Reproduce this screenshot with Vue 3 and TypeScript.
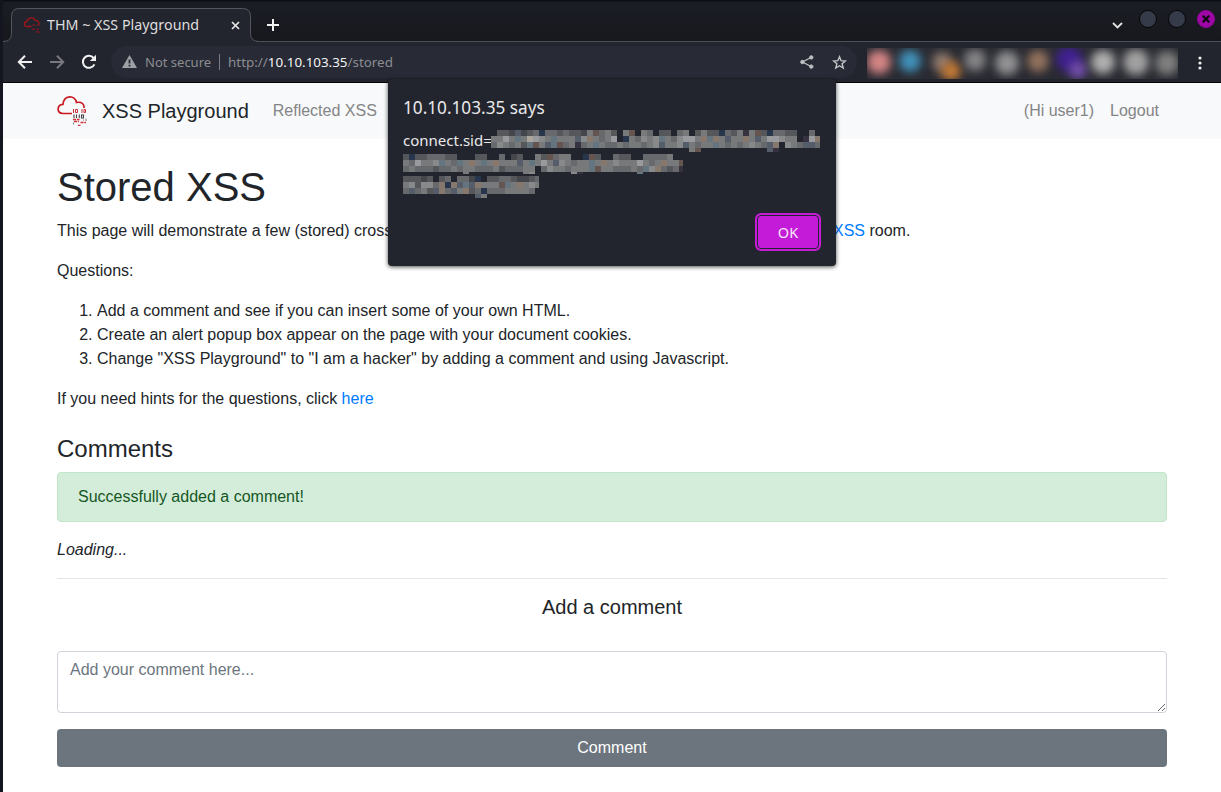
<script setup lang="ts">
interface Cell { x: number; y: number; w: number; h: number; fill: string }
interface Band { x: number; y: number; lastW: number; lastH: number; rows: string[] }

const palette: Record<string, string> = {
  a: '#44464b', b: '#56575b', c: '#67696c', d: '#78797b', e: '#87898b', f: '#989a9e',
  g: '#aaa49b', n: '#27354d', m: '#645550', p: '#86786c', s: '#657580', v: '#36323f', u: '#555d6b',
}

const bands: Band[] = [
  {
    x: 88, y: 0, lastW: 5, lastH: 4,
    rows: [
      '.bbauabcnccbcbbadmcdb.dm.dc.bb.cd.bdbbncbdvdmbnccbb..c.',
      'ddfdsdgfedsddduepdcdf.ndcedesdceffdpspduddpdudffedd.vfp',
      'cedcdbsmdusmcdvcdsdccdcddcdeuddeudcddsdcdcdedcup.edcuuc',
      '.................................dm...........uv.......',
    ],
  },
  {
    x: 0, y: 24, lastW: 4, lastH: 2,
    rows: [
      'bnbbcccbb...bb..c.ab..dbmcdd..nmb..cbb..ccccd..',
      'dcfddesdcsdpdsdpdddudsdfduedcddsdpdedddfdcdpddm',
      'cdcccbccdcddcccdbcccdd.ceddcdddsmddcccdcsepcbcv',
      '..........d.........de......ev.........s.......',
    ],
  },
  {
    x: 0, y: 46, lastW: 4, lastH: 4,
    rows: [
      'bbbab.bc.ccan.bbccbaabc',
      'debeecpnpusupdddmsdpded',
      'cucdbupcudpbcncccddddc.',
      '............ud.........',
    ],
  },
]

const cells: Cell[] = bands.flatMap((b) =>
  b.rows.flatMap((row, r) =>
    [...row].flatMap((ch, i) =>
      ch === '.'
        ? []
        : [{
            x: b.x + i * 6,
            y: b.y + r * 6,
            w: i === row.length - 1 ? b.lastW : 6,
            h: r === 3 ? b.lastH : 6,
            fill: palette[ch] ?? '#777',
          }],
    ),
  ),
)

const blobs = [
  { cx: 12, cy: 14, r: 12, c: '#d58585' },
  { cx: 43, cy: 13, r: 11, c: '#4191ba' },
  { cx: 75, cy: 14, r: 10, c: '#8d7a70' },
  { cx: 84, cy: 23, r: 10, c: '#c47a35' },
  { cx: 108, cy: 12, r: 11, c: '#848486' },
  { cx: 140, cy: 15, r: 12, c: '#929294' },
  { cx: 171, cy: 13, r: 11, c: '#93725e' },
  { cx: 202, cy: 11, r: 13, c: '#3f2090' },
  { cx: 211, cy: 22, r: 9, c: '#744fae' },
  { cx: 236, cy: 14, r: 12, c: '#b0b0b0' },
  { cx: 269, cy: 14, r: 13, c: '#a2a2a2' },
  { cx: 300, cy: 15, r: 12, c: '#808080' },
]

const questions = [
  'Add a comment and see if you can insert some of your own HTML.',
  'Create an alert popup box appear on the page with your document cookies.',
  'Change "XSS Playground" to "I am a hacker" by adding a comment and using Javascript.',
]
</script>

<template>
  <div class="window">
    <header class="titlebar">
      <div class="tab">
        <svg class="tab-shape" width="256" height="34" viewBox="0 0 256 34">
          <path d="M0 34V33.500Q8.500 33.500 8.500 25.500V8.500Q8.500 .5 16.500 .5H239.500Q247.500 .5 247.500 8.500V25.500Q247.500 33.500 256 33.500V34z" fill="#23252e" />
          <path d="M0 33.500Q8.500 33.500 8.500 25.500V8.500Q8.500 .5 16.500 .5H239.500Q247.500 .5 247.500 8.500V25.500Q247.500 33.500 256 33.500" fill="none" stroke="#55575e" />
        </svg>
        <svg class="favicon" width="18" height="18" viewBox="0 0 18 18" fill="none" stroke="#a31419" stroke-width="1.3">
          <path d="M8.500 10.500H4C.5 10.500 .5 6 4 5.500C5 1 11 .8 12 4.500C15.500 4 16.500 7 15.500 8.500" />
          <path d="M9.500 9h3M14 9h2.500M9 13.200h3M13.500 13.200h2.500M13 16h3.500" stroke-width="1" />
        </svg>
        <span class="tab-title">THM ~ XSS Playground</span>
        <svg class="tab-close" width="9" height="9" viewBox="0 0 9 9" stroke="#e6e6e6" stroke-width="1.7"><path d="M1 1l7 7M8 1l-7 7" /></svg>
      </div>
      <svg class="plus" width="12" height="12" viewBox="0 0 12 12" stroke="#f2f2f2" stroke-width="2"><path d="M6 0v12M0 6h12" /></svg>
      <div class="controls">
        <svg class="chev" width="11" height="7" viewBox="0 0 11 7" fill="none" stroke="#e2e2e2" stroke-width="1.8"><path d="M1 1l4.500 4.500L10 1" /></svg>
        <span class="dot"></span>
        <span class="dot"></span>
        <span class="dot closer">
          <svg width="8" height="8" viewBox="0 0 8 8" stroke="#08080a" stroke-width="2.200"><path d="M.7.7l6.600 6.600M7.300.7L.7 7.300" /></svg>
        </span>
      </div>
    </header>

    <div class="toolbar">
      <svg class="nav-ic" width="16" height="16" viewBox="0 0 16 16" fill="none" stroke="#f0f0f0" stroke-width="2"><path d="M15 8H2M8 1.700L1.800 8L8 14.300" /></svg>
      <svg class="nav-ic" width="16" height="16" viewBox="0 0 16 16" fill="none" stroke="#77787d" stroke-width="2"><path d="M1 8h13M8 1.700L14.200 8L8 14.300" /></svg>
      <svg class="nav-ic" width="16" height="16" viewBox="0 0 16 16" fill="none">
        <path d="M13.400 10.300A6 6 0 1 1 12.600 4" stroke="#f0f0f0" stroke-width="2" /><path d="M15 .8V7H8.800z" fill="#f0f0f0" />
      </svg>
      <div class="omnibox">
        <svg class="warn" width="15" height="13" viewBox="0 0 15 13"><path d="M7.500 0L15 13H0z" fill="#a0a1a6" /><path d="M6.600 4.500h1.800v4H6.600zM6.600 9.700h1.800v1.700H6.600z" fill="#282a35" /></svg>
        <span class="insecure">Not secure</span>
        <span class="divider"></span>
        <span class="url">http://<b>10.10.103.35</b>/stored</span>
        <svg class="share" width="14" height="14" viewBox="0 0 14 14" fill="#bfc0c2" stroke="#bfc0c2">
          <path d="M11 2.500L2.500 7L11 11.500" fill="none" stroke-width="1.300" /><circle cx="11.300" cy="2.400" r="1.700" /><circle cx="2.400" cy="7" r="1.700" /><circle cx="11.300" cy="11.600" r="1.700" />
        </svg>
        <svg class="star" width="15" height="15" viewBox="0 0 15 15" fill="none" stroke="#c4c5c7" stroke-width="1.400"><path d="M7.500 1.700L9.100 5.700L13.400 6L10.100 8.800L11.200 13L7.500 10.700L3.800 13L4.900 8.800L1.600 6L5.900 5.700z" /></svg>
      </div>
      <svg class="extensions" width="311" height="31" viewBox="0 0 311 31">
        <defs>
          <filter id="soft" x="-100%" y="-100%" width="300%" height="300%" color-interpolation-filters="sRGB"><feGaussianBlur stdDeviation="5" /></filter>
        </defs>
        <rect width="311" height="31" fill="#2a2b32" />
        <circle v-for="(b, i) in blobs" :key="i" :cx="b.cx" :cy="b.cy" :r="b.r" :fill="b.c" filter="url(#soft)" />
      </svg>
      <svg class="more" width="4" height="14" viewBox="0 0 4 14" fill="#efefef"><circle cx="2" cy="2" r="1.600" /><circle cx="2" cy="7" r="1.600" /><circle cx="2" cy="12" r="1.600" /></svg>
    </div>

    <main class="page">
      <nav class="navbar">
        <div class="container nav-row">
          <svg class="logo" width="30" height="30" viewBox="0 0 30 30" fill="none">
            <path d="M15 17.500H6C-.8 17-.2 8.800 6 8.300C7 -1.500 18 -1 19.500 6.500C24.500 5.500 27.500 8 27 12" stroke="#c81b22" stroke-width="1.700" />
            <g stroke="#cc3339" stroke-width="1"><path d="M16.500 13v4M18.500 13.500h2v3h-2zM25 13v4M27 13.500h1.500v3H27z" /><path d="M16 23.500h6.500M17 25.500h5M23.500 26.500h5.500M21 29.300h2.500" stroke-width="1.300" stroke-dasharray="3 .8" /></g>
            <g stroke="#444" stroke-width="1.100"><path d="M17 18.500v3.500M19.500 18.500v3.500M22.300 18.500v3.500M24.500 19h2v3h-2z" /><path d="M16.500 26.500v2M26 24h1M29 22.500v2.500" stroke="#888" /></g>
          </svg>
          <span class="brand">XSS Playground</span>
          <span class="nav-link">Reflected XSS</span>
          <span class="nav-link user">(Hi user1)</span>
          <span class="nav-link logout">Logout</span>
        </div>
      </nav>
      <div class="container body">
        <h1>Stored XSS</h1>
        <div class="intro"><p>This page will demonstrate a few (stored) cross</p><p class="intro-end"><a>XSS</a> room.</p></div>
        <p>Questions:</p>
        <ol><li v-for="q in questions" :key="q">{{ q }}</li></ol>
        <p>If you need hints for the questions, click <a>here</a></p>
        <h4>Comments</h4>
        <div class="alert">Successfully added a comment!</div>
        <p><i>Loading...</i></p>
        <hr />
        <h5>Add a comment</h5>
        <textarea placeholder="Add your comment here..."></textarea>
        <button class="submit">Comment</button>
      </div>
    </main>

    <section class="dialog">
      <div class="dialog-title">10.10.103.35 says</div>
      <div class="dialog-body">
        <span>connect.sid=</span>
        <svg class="mosaic" width="418" height="68" viewBox="0 0 418 68" shape-rendering="crispEdges">
          <rect v-for="(c, i) in cells" :key="i" :x="c.x" :y="c.y" :width="c.w" :height="c.h" :fill="c.fill" />
        </svg>
      </div>
      <button class="ok">OK</button>
    </section>
  </div>
</template>

<style>
body { margin: 0; background: #fff; overflow: hidden; }
</style>

<style scoped>
* { box-sizing: border-box; }
.window {
  position: relative; width: 1221px; height: 792px; overflow: hidden;
  display: flex; flex-direction: column; background: #fff;
  border-left: 3px solid #14161f;
  font-family: "Noto Sans", sans-serif;
}
.titlebar {
  height: 42px; flex: none; display: flex; padding-left: 8px;
  background: linear-gradient(#0d0e14 0 1px, #1b1d25 2px, #17181d);
  border-bottom: 1px solid #4d4f56;
}
.tab {
  position: relative; width: 240px; height: 34px; margin-top: 8px; padding: 0 11px 0 12px;
  display: flex; align-items: center;
}
.tab-shape { position: absolute; left: -8px; top: 0; }
.favicon, .tab-title, .tab-close { position: relative; flex: none; }
.tab-title { margin: 0 0 2px 6px; font-size: 14.3px; color: #dedede; white-space: nowrap; }
.tab-close { margin-left: auto; }
.plus { margin: 19px 0 0 16px; }
.controls { margin-left: auto; display: flex; padding: 10px 6px 0 0; }
.chev { margin: 12px 16px 0 0; }
.dot { width: 18px; height: 18px; margin-right: 11px; border-radius: 50%; border: 1px solid #050608; background: #363b49; }
.closer { margin-right: 0; border-color: #93079b; background: #9e06a6; display: grid; place-items: center; }
.toolbar {
  height: 41px; flex: none; display: flex; align-items: center; padding-left: 14px;
  background: #23252e; border-bottom: 1px solid #030304;
}
.nav-ic { margin-right: 16px; flex: none; }
.omnibox {
  width: 746px; height: 32px; margin-left: -2px; padding: 0 11px; flex: none;
  border-radius: 16px; background: #282a35;
  display: flex; align-items: center; font-size: 13px; color: #8c8d93;
}
.warn { margin-bottom: 1px; }
.insecure { margin-left: 8px; }
.divider { width: 1px; height: 16px; margin: 0 8px; background: #7d7e85; }
.url { font-size: 13.4px; }
.url b { font-weight: 400; color: #f4f4f4; }
.share { margin-left: auto; }
.star { margin-left: 18px; margin-right: -1px; }
.extensions { margin: 3px 0 0 10px; flex: none; }
.more { margin: 1px 0 0 20px; }
.page { flex: 1; color: #212529; font: 16px/24px "Liberation Sans", Arial, sans-serif; }
.navbar { height: 56px; background: #f8f9fa; }
.container { width: 1140px; padding: 0 15px; margin: 0 auto; }
.nav-row { height: 56px; display: flex; align-items: center; }
.brand { margin-left: 15px; font-size: 20px; }
.nav-link { margin-left: 24px; color: #848586; }
.nav-link.user { margin-left: auto; }
.nav-link.logout { margin: 0 8px 0 16px; }
.body { padding-top: 24px; }
h1, h4, h5, p { margin: 0; font-weight: 400; }
h1 { font-size: 40px; line-height: 48px; margin-bottom: 8px; }
p { margin-bottom: 16px; }
a { color: #007bff; }
.intro { display: flex; }
.intro-end { margin-left: auto; width: 334px; }
ol { margin: 0 0 16px; padding-left: 40px; }
h4 { font-size: 24px; line-height: 28px; margin: 24px 0 9px; }
.alert { height: 50px; padding: 12px 20px; margin-bottom: 16px; border: 1px solid #c3e6cb; border-radius: 4px; background: #d4edda; color: #155724; }
hr { margin: 16px 0; border: 0; border-top: 1px solid rgba(0, 0, 0, .1); }
h5 { font-size: 20px; line-height: 24px; text-align: center; margin-bottom: 32px; }
textarea {
  display: block; width: 100%; height: 62px; padding: 6px 12px; border: 1px solid #ced4da; border-radius: 4px;
  font: inherit; color: #495057; resize: vertical; margin-bottom: 16px; outline: 0;
}
textarea::placeholder { color: #6c757d; opacity: 1; }
.submit { display: block; width: 100%; height: 38px; border: 0; border-radius: 4px; background: #6c757d; color: #fff; font: inherit; }
.dialog {
  position: absolute; left: 385px; top: 79px; width: 448px; height: 187px; padding: 17px 15px 16px;
  display: flex; flex-direction: column; background: #23252e; color: #e9e9ea;
  border-radius: 4px; box-shadow: 0 1px 4px rgba(0, 0, 0, .7);
}
.dialog-title { height: 24px; line-height: 24px; font-size: 17.2px; }
.dialog-body { position: relative; margin-top: 9px; font-size: 15px; line-height: 22px; }
.mosaic { position: absolute; left: 0; top: 1px; }
.ok {
  margin: auto 2px 1px auto; width: 62px; height: 34px; padding: 0; border: 1px solid #23252e; border-radius: 4px;
  background: #c41bd8; box-shadow: 0 0 0 2px #c41bd8; color: #f7e9f8; font: 14.5px "Noto Sans", sans-serif; outline: 0;
}
</style>
